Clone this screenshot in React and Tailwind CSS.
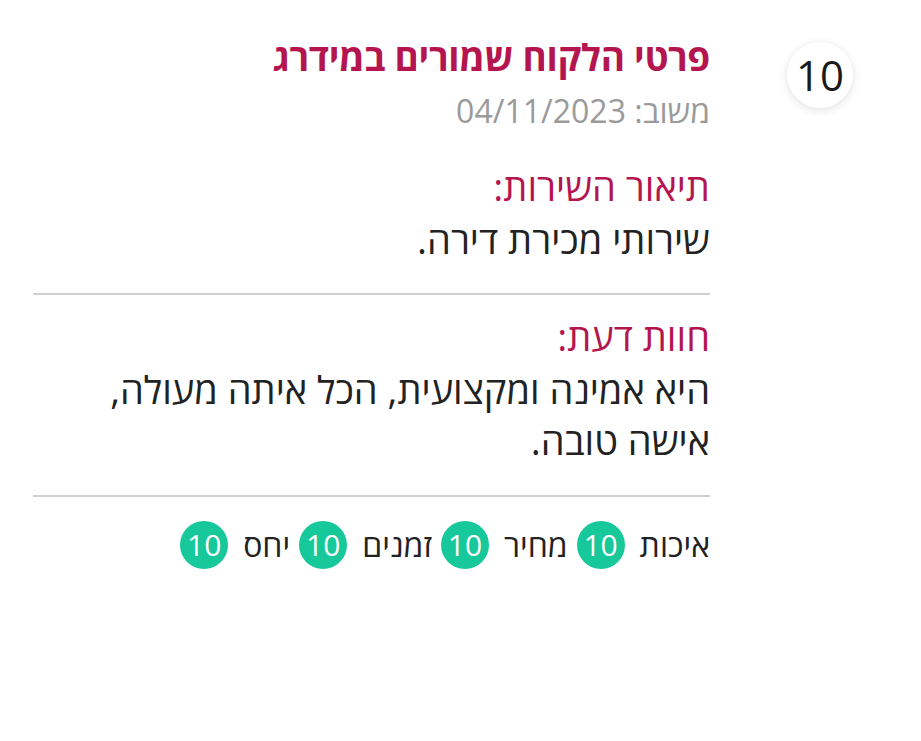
import React from 'react';

const ratings = [
  { label: 'איכות', score: 10 },
  { label: 'מחיר', score: 10 },
  { label: 'זמנים', score: 10 },
  { label: 'יחס', score: 10 },
];

const App = () => {
  return (
    <div
      dir="rtl"
      className="min-h-[741px] w-[921px] bg-white text-[#222] flex items-start gap-[77px] pt-[31px] pr-[68px] pl-[33px]"
      style={{ fontFamily: '"Open Sans", "DejaVu Sans", sans-serif' }}
    >
      {/* Overall score */}
      <div className="w-[66px] h-[66px] mt-[11px] shrink-0 rounded-full bg-white shadow-[0_2px_10px_rgba(0,0,0,0.12)] flex items-center justify-center text-[42px] leading-none text-[#1a1a1a]">
        10
      </div>

      {/* Review body */}
      <div className="flex-1">
        <h2 className="text-[37px] leading-[51px] font-bold text-[#b5154f] tracking-[-0.3px]">פרטי הלקוח שמורים במידרג</h2>
        <p className="text-[32px] leading-[51px] text-[#9a9a9a] mt-[3px]">משוב: 04/11/2023</p>

        <h3 className="text-[38px] leading-[51px] text-[#b5154f] mt-[25px]">תיאור השירות:</h3>
        <p className="text-[38px] leading-[51px] mt-[2px]">שירותי מכירת דירה.</p>

        <hr className="border-0 h-[2px] bg-[#d0d0d0] mt-[28px]" />

        <h3 className="text-[38px] leading-[51px] text-[#b5154f] mt-[16px]">חוות דעת:</h3>
        <p className="text-[38px] leading-[51px] mt-[2px]">
          היא אמינה ומקצועית, הכל איתה מעולה,
          <br />
          אישה טובה.
        </p>

        <hr className="border-0 h-[2px] bg-[#d0d0d0] mt-[29px]" />

        <div className="flex items-center gap-[9px] mt-[24px]">
          {ratings.map((r) => (
            <div key={r.label} className="flex items-center gap-[15px]">
              <span className="text-[32px] leading-none">{r.label}</span>
              <span className="w-[48px] h-[48px] rounded-full bg-[#17c89a] text-white flex items-center justify-center text-[30px] leading-none">
                {r.score}
              </span>
            </div>
          ))}
        </div>
      </div>
    </div>
  );
};

export default App;
